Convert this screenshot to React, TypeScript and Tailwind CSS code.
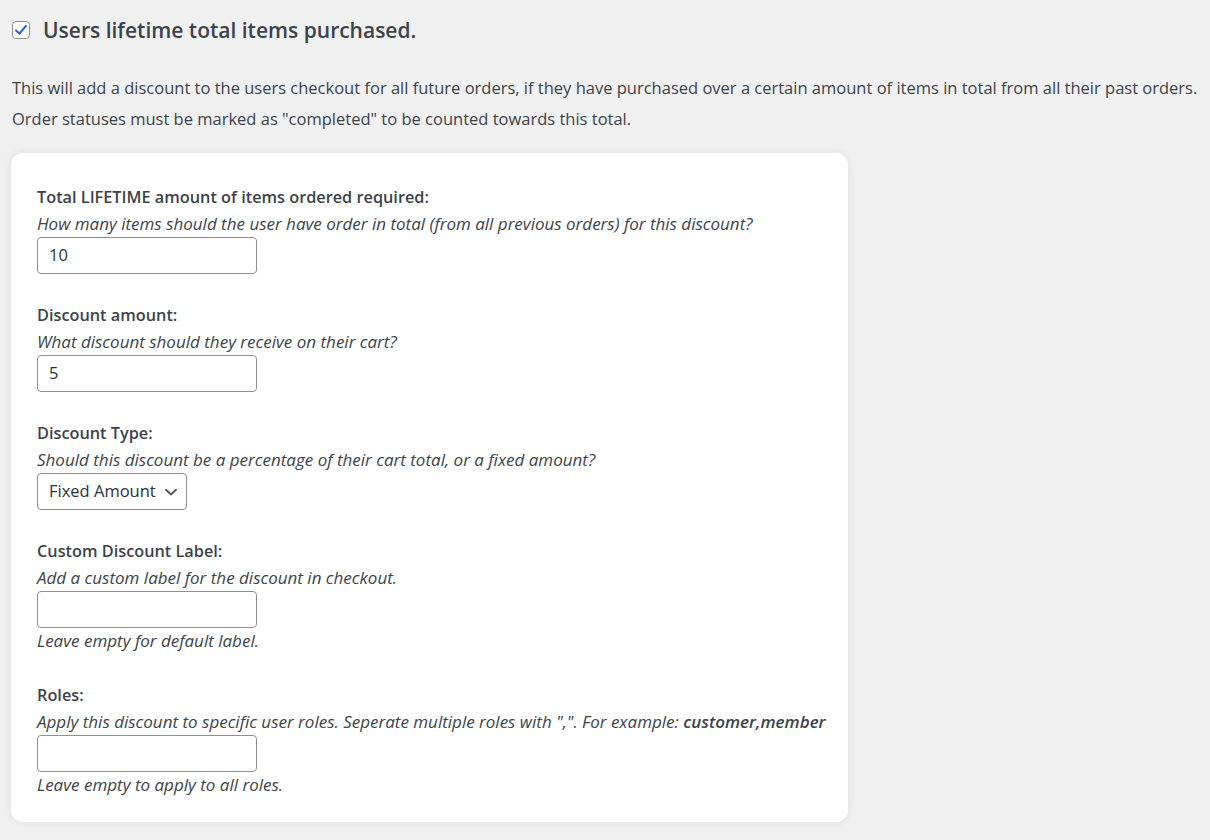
import React from "react";

const font = { fontFamily: '"Open Sans", "Noto Sans", sans-serif' };

function Field({
  label,
  help,
  children,
  after,
}: {
  label: string;
  help: React.ReactNode;
  children: React.ReactNode;
  after?: string;
}) {
  return (
    <div className="mb-[28px] last:mb-0">
      <div className="text-[16.3px] leading-[27px] font-semibold text-[#3c434a]">{label}</div>
      <div className="text-[17px] leading-[26px] italic text-[#3c434a] whitespace-nowrap">{help}</div>
      {children}
      {after && <div className="text-[17px] leading-[26px] italic text-[#3c434a]">{after}</div>}
    </div>
  );
}

function TextInput({ value }: { value?: string }) {
  return (
    <div className="w-[220px] h-[37px] border border-[#8c8f94] rounded-[4px] bg-white flex items-center px-[11px] text-[16.5px] text-[#2c3338]">
      {value}
    </div>
  );
}

export default function App() {
  return (
    <div className="min-h-[840px] w-[1210px] bg-[#f0f0f1] text-[#3c434a] overflow-hidden" style={font}>
      <div className="flex items-center h-[40px] mt-[10px] pl-[12px]">
        <div className="w-[18px] h-[18px] rounded-[4px] border border-[#8c8f94] bg-white flex items-center justify-center">
          <svg width="16" height="16" viewBox="0 0 16 16">
            <path d="M3 8.4 L6.4 11.6 L12.9 4" fill="none" stroke="#3858e9" strokeWidth="2.1" strokeLinecap="round" strokeLinejoin="round" />
          </svg>
        </div>
        <div className="ml-[13px] text-[21px] font-semibold text-[#3c434a] leading-[30px]">Users lifetime total items purchased.</div>
      </div>
      <div className="pl-[12px] mt-[22px] text-[16.5px] leading-[31px] text-[#3c434a] whitespace-nowrap">
        <div>
          This will add a discount to the users checkout for all future orders, if they have purchased over a certain amount of items in total from all their past orders.
        </div>
        <div>Order statuses must be marked as "completed" to be counted towards this total.</div>
      </div>
      <div className="ml-[11px] mt-[19px] w-[837px] bg-white rounded-[12px] shadow-[0_0_10px_rgba(0,0,0,0.07)] pt-[31px] pb-[24px] px-[26px]">
        <Field
          label="Total LIFETIME amount of items ordered required:"
          help="How many items should the user have order in total (from all previous orders) for this discount?"
        >
          <TextInput value="10" />
        </Field>
        <Field label="Discount amount:" help="What discount should they receive on their cart?">
          <TextInput value="5" />
        </Field>
        <Field
          label="Discount Type:"
          help="Should this discount be a percentage of their cart total, or a fixed amount?"
        >
          <div className="w-[150px] flex items-center h-[37px] border border-[#8c8f94] rounded-[4px] bg-white pl-[11px] pr-[7px] text-[16.5px] text-[#2c3338]">
            <span>Fixed Amount</span>
            <svg className="ml-auto" width="16" height="16" viewBox="0 0 16 16">
              <path d="M3 5.8 L8 10.5 L13 5.8" fill="none" stroke="#50575e" strokeWidth="1.9" strokeLinecap="round" strokeLinejoin="round" />
            </svg>
          </div>
        </Field>
        <Field
          label="Custom Discount Label:"
          help="Add a custom label for the discount in checkout."
          after="Leave empty for default label."
        >
          <TextInput />
        </Field>
        <Field
          label="Roles:"
          help={
            <>
              Apply this discount to specific user roles. Seperate multiple roles with ",". For example:{" "}
              <b className="font-semibold">customer,member</b>
            </>
          }
          after="Leave empty to apply to all roles."
        >
          <TextInput />
        </Field>
      </div>
    </div>
  );
}
